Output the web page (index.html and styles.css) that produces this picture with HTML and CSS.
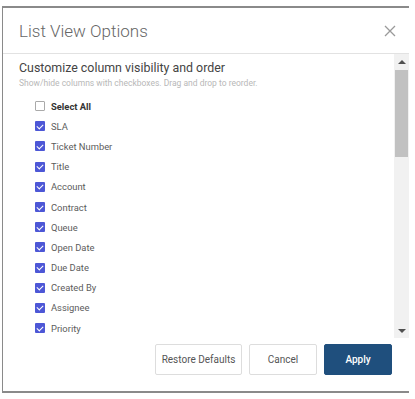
FILE: index.html
```html
<!DOCTYPE html>
<html lang="en">
<head>
  <meta charset="UTF-8">
  <title>List View Options</title>
  <link rel="stylesheet" href="styles.css">
</head>
<body>
  <!-- Диалог настроек списка -->
  <div class="dialog">
    <div class="dialog-header">
      <span class="dialog-title">List View Options</span>
      <svg class="close-btn" width="12" height="12" viewBox="0 0 12 12">
        <path d="M1 1 L11 11 M11 1 L1 11" stroke="#9a9a9a" stroke-width="1.3" fill="none"/>
      </svg>
    </div>

    <div class="dialog-body">
      <div class="body-content">
        <h2 class="section-title">Customize column visibility and order</h2>
        <p class="section-hint">Show/hide columns with checkboxes. Drag and drop to reorder.</p>

        <ul class="columns-list">
          <li class="column-item select-all"><span class="box"></span>Select All</li>
          <li class="column-item"><span class="box checked"></span>SLA</li>
          <li class="column-item"><span class="box checked"></span>Ticket Number</li>
          <li class="column-item"><span class="box checked"></span>Title</li>
          <li class="column-item"><span class="box checked"></span>Account</li>
          <li class="column-item"><span class="box checked"></span>Contract</li>
          <li class="column-item"><span class="box checked"></span>Queue</li>
          <li class="column-item"><span class="box checked"></span>Open Date</li>
          <li class="column-item"><span class="box checked"></span>Due Date</li>
          <li class="column-item"><span class="box checked"></span>Created By</li>
          <li class="column-item"><span class="box checked"></span>Assignee</li>
          <li class="column-item"><span class="box checked"></span>Priority</li>
        </ul>
      </div>

      <!-- Полоса прокрутки -->
      <div class="scrollbar">
        <span class="arrow arrow-up"></span>
        <div class="scroll-track">
          <div class="scroll-thumb"></div>
        </div>
        <span class="arrow arrow-down"></span>
      </div>
    </div>

    <div class="dialog-footer">
      <button class="btn btn-restore">Restore Defaults</button>
      <button class="btn">Cancel</button>
      <button class="btn btn-primary">Apply</button>
    </div>
  </div>
</body>
</html>
```

FILE: styles.css
```css
/* Общие стили страницы */
body {
  margin: 0;
  padding: 6px 0 0 2px;
  font-family: Roboto, "Liberation Sans", sans-serif;
  background: #fff;
}

/* Окно диалога */
.dialog {
  width: 407px;
  height: 387px;
  box-sizing: border-box;
  border-top: 2px solid #8a8a8a;
  border-left: 1px solid #8a8a8a;
  border-bottom: 2px solid #8a8a8a;
  display: flex;
  flex-direction: column;
}

/* Заголовок */
.dialog-header {
  height: 45px;
  flex: none;
  display: flex;
  align-items: center;
  justify-content: space-between;
  padding: 0 13px 0 16px;
  border-bottom: 1px solid #e2e2e2;
}

.dialog-title {
  font-size: 17px;
  font-weight: 300;
  color: #666;
}

/* Основная часть с прокруткой */
.dialog-body {
  height: 284px;
  flex: none;
  display: flex;
}

.body-content {
  flex: 1;
  overflow: hidden;
  padding-left: 16px;
}

.section-title {
  margin: 6px 0 0;
  font-size: 12.4px;
  font-weight: 400;
  color: #444;
}

.section-hint {
  margin: 3px 0 0;
  font-size: 8.5px;
  color: #b8b8b8;
}

/* Список колонок */
.columns-list {
  list-style: none;
  margin: 8px 0 0;
  padding: 0 0 0 16px;
}

.column-item {
  height: 20.2px;
  display: flex;
  align-items: center;
  gap: 6px;
  font-size: 9.4px;
  color: #5c5c5c;
}

.select-all {
  font-weight: 700;
  color: #333;
}

/* Чекбокс */
.box {
  width: 10px;
  height: 10px;
  box-sizing: border-box;
  border: 1px solid #aaa;
  border-radius: 1px;
  flex: none;
}

.box.checked {
  border: none;
  background: #4d57d6;
  position: relative;
}

.box.checked::after {
  content: "";
  position: absolute;
  left: 3px;
  top: 1.5px;
  width: 3px;
  height: 5px;
  border: solid #fff;
  border-width: 0 1.2px 1.2px 0;
  transform: rotate(45deg);
}

/* Полоса прокрутки */
.scrollbar {
  width: 15px;
  flex: none;
  background: #f1f1f1;
  display: flex;
  flex-direction: column;
  align-items: center;
}

.arrow {
  height: 15px;
  flex: none;
  display: flex;
  align-items: center;
}

.arrow-up::before {
  content: "";
  border: 4px solid transparent;
  border-top: none;
  border-bottom: 4px solid #505050;
}

.arrow-down::before {
  content: "";
  border: 4px solid transparent;
  border-bottom: none;
  border-top: 4px solid #505050;
}

.scroll-track {
  flex: 1;
  width: 100%;
}

.scroll-thumb {
  height: 87px;
  margin: 1px 1px 0;
  background: #c1c1c1;
}

/* Нижняя панель */
.dialog-footer {
  flex: 1;
  display: flex;
  justify-content: flex-end;
  align-items: flex-start;
  gap: 7px;
  padding: 6px 17px 0 0;
}

.btn {
  width: 68px;
  height: 31px;
  padding: 0;
  font-family: inherit;
  font-size: 10px;
  color: #555;
  background: #fff;
  border: 1px solid #ddd;
  border-radius: 2px;
}

.btn-restore {
  width: 87px;
}

.btn-primary {
  background: #1f4f7d;
  border-color: #1f4f7d;
  color: #fff;
  font-weight: 500;
}
```
